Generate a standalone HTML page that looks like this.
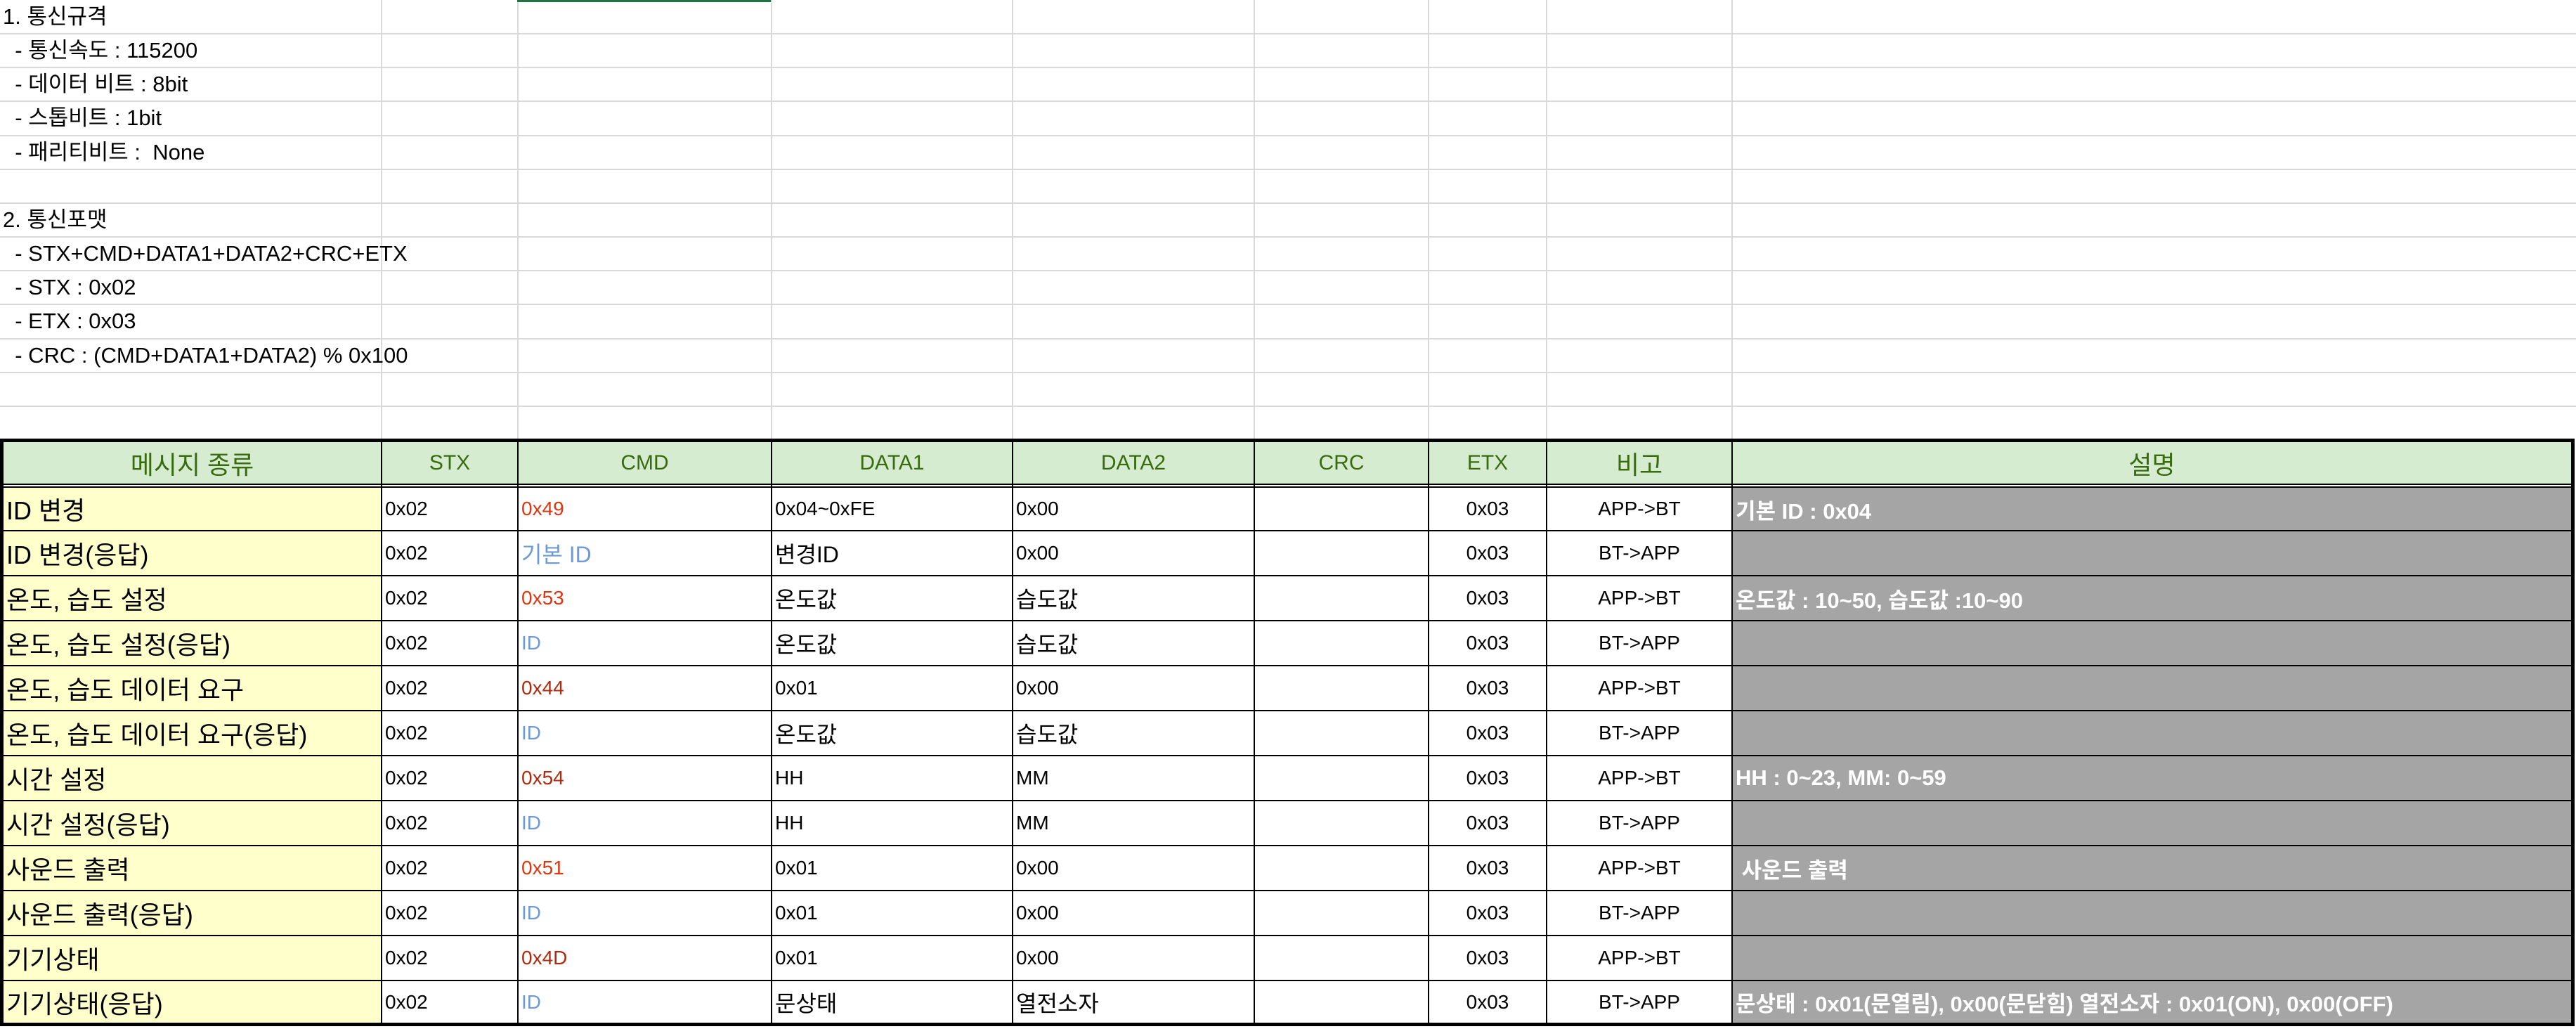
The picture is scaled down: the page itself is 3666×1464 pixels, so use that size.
<!DOCTYPE html>
<html><head><meta charset="utf-8"><style>
*{margin:0;padding:0;box-sizing:border-box}
body{width:3666px;height:1464px;background:#fff;position:relative;overflow:hidden;font-family:"Liberation Sans","Noto Sans CJK KR",sans-serif;color:#000}
.v{position:absolute;top:0;width:2px;height:626px;background:#d9d9d9}
.h{position:absolute;left:0;width:3666px;height:2px;background:#d9d9d9}
.t{position:absolute;left:4px;font-size:31px;line-height:48px;white-space:nowrap}
.tb{position:absolute;left:0;top:624px;width:3664px;height:836px;border:5px solid #000}
.c{position:absolute;font-size:28px;white-space:nowrap;padding-left:4px;display:flex;align-items:center;overflow:hidden}
.hd{background:#d5ecd0;color:#3a6b0f;justify-content:center;padding:0;font-size:30px}
.y{background:#ffffcc;font-size:36px}
.g{background:#a5a5a5;color:#fff;font-weight:bold;font-size:31px}
.ce{justify-content:center;padding:0}
.r{color:#e0360f}.dr{color:#b3290c}.b{color:#6d9ad8}
.vl{position:absolute;width:2px;background:#000;top:629px;height:826px}
.hl{position:absolute;left:0;width:3659px;height:2px;background:#000}
</style></head><body>
<div class="v" style="left:542px"></div><div class="v" style="left:736px"></div><div class="v" style="left:1097px"></div><div class="v" style="left:1440px"></div><div class="v" style="left:1784px"></div><div class="v" style="left:2032px"></div><div class="v" style="left:2200px"></div><div class="v" style="left:2464px"></div>
<div class="h" style="top:47px"></div><div class="h" style="top:95px"></div><div class="h" style="top:143px"></div><div class="h" style="top:192px"></div><div class="h" style="top:240px"></div><div class="h" style="top:288px"></div><div class="h" style="top:336px"></div><div class="h" style="top:384px"></div><div class="h" style="top:432px"></div><div class="h" style="top:481px"></div><div class="h" style="top:529px"></div><div class="h" style="top:577px"></div>
<div style="position:absolute;left:736px;top:0;width:361px;height:3px;background:#217346"></div>
<div class="t" style="top:0">1. 통신규격</div>
<div class="t" style="top:48px">&nbsp; - 통신속도 : 115200</div>
<div class="t" style="top:96px">&nbsp; - 데이터 비트 : 8bit</div>
<div class="t" style="top:144px">&nbsp; - 스톱비트 : 1bit</div>
<div class="t" style="top:193px">&nbsp; - 패리티비트 :&nbsp; None</div>
<div class="t" style="top:289px">2. 통신포맷</div>
<div class="t" style="top:337px">&nbsp; - STX+CMD+DATA1+DATA2+CRC+ETX</div>
<div class="t" style="top:385px">&nbsp; - STX : 0x02</div>
<div class="t" style="top:433px">&nbsp; - ETX : 0x03</div>
<div class="t" style="top:482px">&nbsp; - CRC : (CMD+DATA1+DATA2) % 0x100</div>

<div class="tb"></div>
<div class="c hd" style="left:5px;top:629px;width:537px;height:59px;font-size:36px">메시지 종류</div>
<div class="c hd" style="left:544px;top:629px;width:192px;height:59px">STX</div>
<div class="c hd" style="left:738px;top:629px;width:359px;height:59px">CMD</div>
<div class="c hd" style="left:1099px;top:629px;width:341px;height:59px">DATA1</div>
<div class="c hd" style="left:1442px;top:629px;width:342px;height:59px">DATA2</div>
<div class="c hd" style="left:1786px;top:629px;width:246px;height:59px">CRC</div>
<div class="c hd" style="left:2034px;top:629px;width:166px;height:59px">ETX</div>
<div class="c hd" style="left:2202px;top:629px;width:262px;height:59px;font-size:36px">비고</div>
<div class="c hd" style="left:2466px;top:629px;width:1193px;height:59px;font-size:36px">설명</div>
<div class="hl" style="top:688px"></div><div class="hl" style="top:692px"></div>

<div id="rows"></div>
<script>
(function(){
var d=[
["ID 변경","r","0x49","0x04~0xFE","0x00","APP->BT","기본 ID : 0x04"],
["ID 변경(응답)","b","기본 ID","변경ID","0x00","BT->APP",""],
["온도, 습도 설정","r","0x53","온도값","습도값","APP->BT","온도값 : 10~50, 습도값 :10~90"],
["온도, 습도 설정(응답)","b","ID","온도값","습도값","BT->APP",""],
["온도, 습도 데이터 요구","dr","0x44","0x01","0x00","APP->BT",""],
["온도, 습도 데이터 요구(응답)","b","ID","온도값","습도값","BT->APP",""],
["시간 설정","dr","0x54","HH","MM","APP->BT","HH : 0~23, MM: 0~59"],
["시간 설정(응답)","b","ID","HH","MM","BT->APP",""],
["사운드 출력","r","0x51","0x01","0x00","APP->BT","&nbsp;사운드 출력"],
["사운드 출력(응답)","b","ID","0x01","0x00","BT->APP",""],
["기기상태","dr","0x4D","0x01","0x00","APP->BT",""],
["기기상태(응답)","b","ID","문상태","열전소자","BT->APP","문상태 : 0x01(문열림), 0x00(문닫힘) 열전소자 : 0x01(ON), 0x00(OFF)"]];
var h="";
function cell(y,ht,l,w,cls,t,st){return '<div class="c '+cls+'" style="left:'+l+'px;top:'+y+'px;width:'+w+'px;height:'+ht+'px;'+(st||'')+'">'+t+'</div>';}
var ko=/[\uAC00-\uD7A3]/;
for(var i=0;i<12;i++){
 var y0=i==0?694:754+64*(i-1)+2, y1=i==11?1455:754+64*i, ht=y1-y0, r=d[i];
 h+=cell(y0,ht,5,537,'y',r[0]);
 h+=cell(y0,ht,544,192,'','0x02');
 h+=cell(y0,ht,738,359,r[1],r[2],ko.test(r[2])?'font-size:32px':'');
 h+=cell(y0,ht,1099,341,'',r[3],ko.test(r[3])?'font-size:32px':'');
 h+=cell(y0,ht,1442,342,'',r[4],ko.test(r[4])?'font-size:32px':'');
 h+=cell(y0,ht,1786,246,'','');
 h+=cell(y0,ht,2034,166,'ce','0x03');
 h+=cell(y0,ht,2202,262,'ce',r[5]);
 h+=cell(y0,ht,2466,1193,'g',r[6]);
 if(i<11)h+='<div class="hl" style="top:'+(754+64*i)+'px"></div>';
}
var xs=[542,736,1097,1440,1784,2032,2200,2464];
for(var j=0;j<xs.length;j++)h+='<div class="vl" style="left:'+xs[j]+'px"></div>';
document.getElementById('rows').innerHTML=h;
})();
</script>
</body></html>
